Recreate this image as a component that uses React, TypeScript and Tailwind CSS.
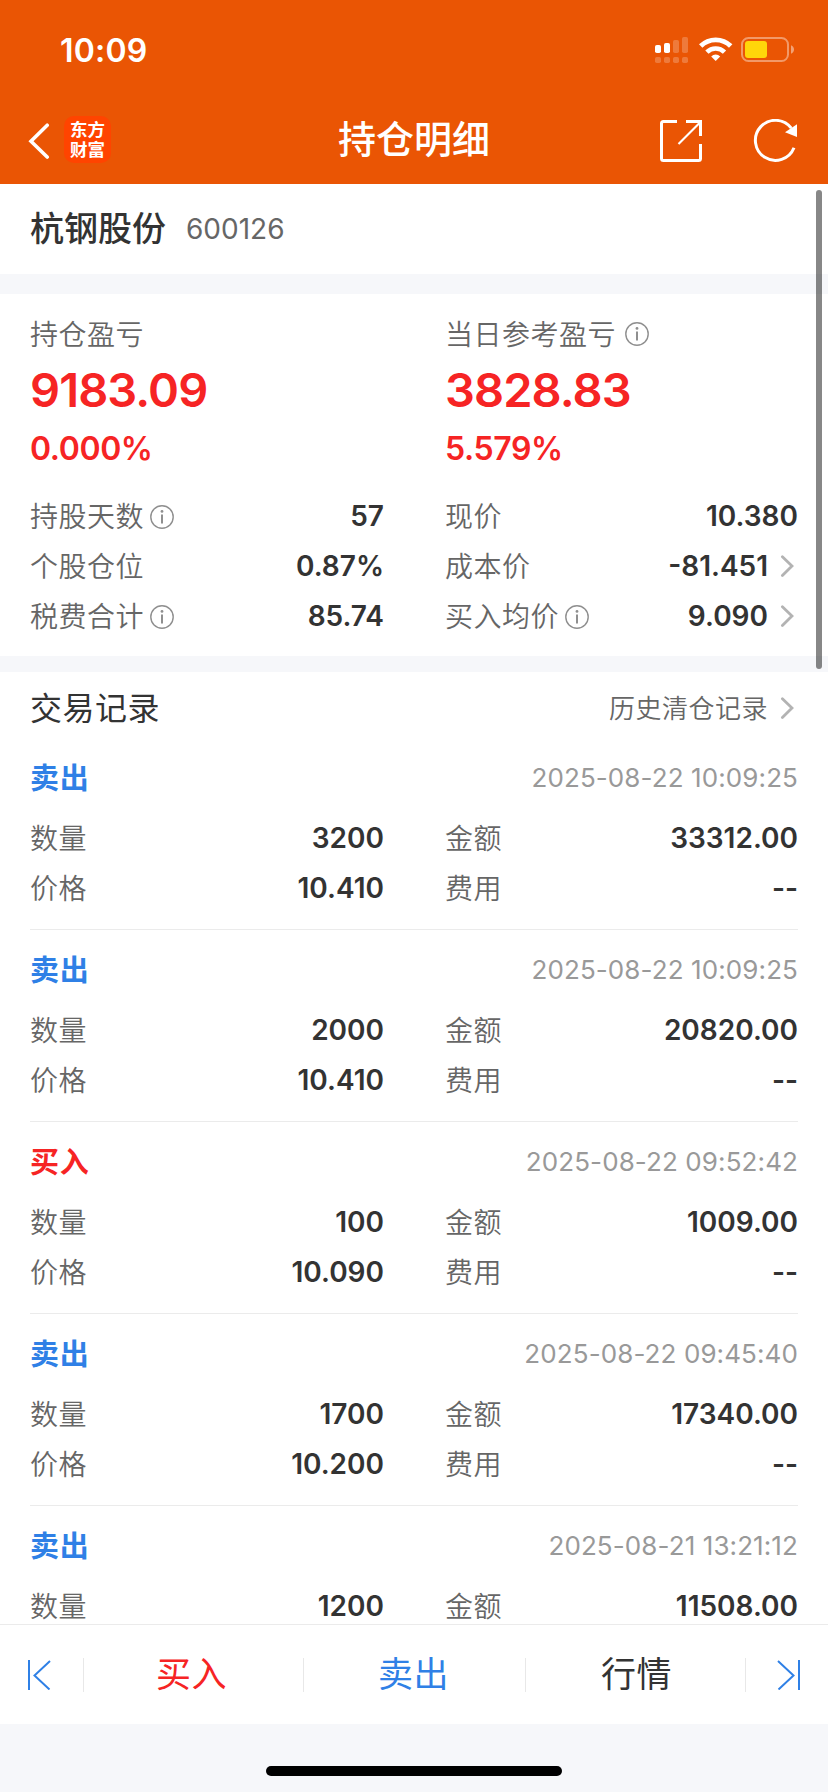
import React from 'react';

const latin = "font-['Inter','Noto_Sans_CJK_SC',sans-serif]";

type Trade = { side: 'buy' | 'sell'; time: string; qty: string; amount: string; price?: string; fee?: string };

const trades: Trade[] = [
  { side: 'sell', time: '2025-08-22 10:09:25', qty: '3200', amount: '33312.00', price: '10.410', fee: '--' },
  { side: 'sell', time: '2025-08-22 10:09:25', qty: '2000', amount: '20820.00', price: '10.410', fee: '--' },
  { side: 'buy', time: '2025-08-22 09:52:42', qty: '100', amount: '1009.00', price: '10.090', fee: '--' },
  { side: 'sell', time: '2025-08-22 09:45:40', qty: '1700', amount: '17340.00', price: '10.200', fee: '--' },
  { side: 'sell', time: '2025-08-21 13:21:12', qty: '1200', amount: '11508.00' },
];

function InfoIcon({ className = '' }: { className?: string }) {
  return (
    <svg className={`h-6 w-6 shrink-0 ${className}`} viewBox="0 0 24 24" fill="none">
      <circle cx="12" cy="12" r="11.2" stroke="#8f8f8f" strokeWidth="1.4" />
      <circle cx="12" cy="6.4" r="1.4" fill="#8f8f8f" />
      <path d="M12 9.6V18.6" stroke="#8f8f8f" strokeWidth="2" />
    </svg>
  );
}

function Chevron() {
  return (
    <svg className="mr-1 ml-3 h-6 w-[14px] shrink-0" viewBox="0 0 14 24" fill="none">
      <path d="M2.4 2.8L12 12L2.4 21.6" stroke="#b3b3b3" strokeWidth="2.8" strokeLinecap="round" strokeLinejoin="miter" />
    </svg>
  );
}

function Row({ label, value, info, arrow }: { label: string; value: string; info?: boolean; arrow?: boolean }) {
  return (
    <div className="flex h-[50px] items-center">
      <span className="pt-[2px] text-[28px] font-[350] tracking-[0.5px] text-[#666]">{label}</span>
      {info && <InfoIcon className="mt-[2px] ml-[6px]" />}
      <span className="ml-auto text-[28px] font-semibold text-[#333]">{value}</span>
      {arrow && <Chevron />}
    </div>
  );
}

function Summary({ label, value, percent, info }: { label: string; value: string; percent: string; info?: boolean }) {
  return (
    <div className="mb-[21px]">
      <div className="flex h-10 items-center">
        <span className="pt-[2px] text-[28px] font-[350] tracking-[0.5px] text-[#666]">{label}</span>
        {info && <InfoIcon className="ml-[9px]" />}
      </div>
      <div className="flex h-[72px] items-center text-[47px] font-semibold tracking-[-0.9px] text-[#f62424]">{value}</div>
      <div className="flex h-11 items-center pt-[2px] text-[32px] font-semibold tracking-[-0.4px] text-[#f62424]">{percent}</div>
    </div>
  );
}

function TradeItem({ t }: { t: Trade }) {
  return (
    <div className="h-[192px] shrink-0 border-b border-[#ebebeb]">
      <div className="flex h-[75px] items-center justify-between pt-[5px]">
        <span className={`pt-[2px] text-[29px] font-bold tracking-[0.8px] ${t.side === 'sell' ? 'text-[#2f80e6]' : 'text-[#f62424]'}`}>
          {t.side === 'sell' ? '卖出' : '买入'}
        </span>
        <span className="pb-[2px] text-[26px] tracking-[0.1px] text-[#999]">{t.time}</span>
      </div>
      <div className="grid grid-cols-[354px_353px] gap-x-[61px]">
        <Row label="数量" value={t.qty} />
        <Row label="金额" value={t.amount} />
        {t.price && <Row label="价格" value={t.price} />}
        {t.fee && <Row label="费用" value={t.fee} />}
      </div>
    </div>
  );
}

function StatusBar() {
  return (
    <div className="flex h-[98px] items-center justify-between pr-[34px] pl-[60px]">
      <span className="pt-[3px] text-[32px] leading-none font-semibold tracking-[0.2px] text-white">10:09</span>
      <svg className="h-[30px] w-[141px]" viewBox="0 0 141 30" fill="none">
        <g fill="#fff">
          <rect x="2" y="11" width="6" height="8" rx="1.8" />
          <rect x="11" y="9" width="6" height="10" rx="1.8" />
          <g opacity=".22">
            <rect x="20" y="6" width="6" height="13" rx="1.8" />
            <rect x="29" y="3" width="6" height="16" rx="1.8" />
            <rect x="2" y="23" width="6" height="6" rx="1.8" />
            <rect x="11" y="23" width="6" height="6" rx="1.8" />
            <rect x="20" y="23" width="6" height="6" rx="1.8" />
            <rect x="29" y="23" width="6" height="6" rx="1.8" />
          </g>
        </g>
        <path d="M47.7 12A21.2 21.2 0 0 1 77.7 12" stroke="#fff" strokeWidth="4.8" />
        <path d="M53.9 18.2A12.4 12.4 0 0 1 71.5 18.2" stroke="#fff" strokeWidth="4.6" />
        <path d="M62.7 27L58.2 22.5A6.3 6.3 0 0 1 67.2 22.5Z" fill="#fff" />
        <rect x="89" y="4" width="46" height="23" rx="6.5" stroke="#fff" strokeOpacity=".4" strokeWidth="2" />
        <rect x="92" y="7" width="22" height="17" rx="3" fill="#ffd60a" />
        <path d="M138 11.2C142 13 142 18 138 19.8Z" fill="#fff" fillOpacity=".45" />
      </svg>
    </div>
  );
}

function NavBar() {
  return (
    <div className="grid h-[86px] grid-cols-[280px_1fr_280px] items-center">
      <div className="flex items-center pb-[3px] pl-7">
        <svg className="mt-[2px] h-9 w-[22px]" viewBox="0 0 22 36" fill="none">
          <path d="M19.2 2.2L3 18.2L19.2 34" stroke="#fff" strokeWidth="3.6" strokeLinecap="round" strokeLinejoin="miter" />
        </svg>
        <div className="ml-[14px] flex h-[47px] w-[47px] flex-col items-center justify-center rounded-[10px] bg-[#ff4400] text-[17.5px] leading-[19.5px] font-bold text-white">
          <span>东方</span>
          <span>财富</span>
        </div>
      </div>
      <h1 className="pb-1 text-center text-[38px] leading-none font-medium text-white">持仓明细</h1>
      <div className="flex items-center justify-end pr-[30px]">
        <svg className="h-11 w-11" viewBox="0 0 44 44" fill="none" stroke="#fff" strokeWidth="3">
          <path d="M18 2.5H4.5Q2.5 2.5 2.5 4.5V39.5Q2.5 41.5 4.5 41.5H39.5Q41.5 41.5 41.5 39.5V25" />
          <path d="M27 2.5H41.5V17" />
          <path d="M41.5 3L19.5 25" strokeWidth="2.2" />
        </svg>
        <svg className="ml-[50px] h-11 w-[45px]" viewBox="0 0 45 44" fill="none">
          <path d="M41 28.7A20 20 0 1 1 38.3 9.2" stroke="#fff" strokeWidth="3" />
          <path d="M44 5.3V18L32 13.3Z" fill="#fff" />
        </svg>
      </div>
    </div>
  );
}

export default function App() {
  return (
    <div className={`relative flex h-[1792px] w-[828px] flex-col overflow-hidden bg-white ${latin}`}>
      <header className="h-[184px] shrink-0 bg-[#ea5504]">
        <StatusBar />
        <NavBar />
      </header>

      <section className="flex h-[90px] shrink-0 items-center px-[30px]">
        <span className="pb-[2px] text-[34px] font-medium text-[#333]">杭钢股份</span>
        <span className="ml-5 text-[28px] text-[#666]">600126</span>
      </section>

      <div className="h-5 shrink-0 bg-[#f6f7fa]" />

      <section className="grid h-[362px] shrink-0 grid-cols-[354px_353px] content-start gap-x-[61px] px-[30px] pt-5">
        <Summary label="持仓盈亏" value="9183.09" percent="0.000%" />
        <Summary label="当日参考盈亏" value="3828.83" percent="5.579%" info />
        <Row label="持股天数" value="57" info />
        <Row label="现价" value="10.380" />
        <Row label="个股仓位" value="0.87%" />
        <Row label="成本价" value="-81.451" arrow />
        <Row label="税费合计" value="85.74" info />
        <Row label="买入均价" value="9.090" info arrow />
      </section>

      <div className="h-4 shrink-0 bg-[#f6f7fa]" />

      <section className="flex min-h-0 flex-1 flex-col overflow-hidden px-[30px]">
        <div className="flex h-[66px] shrink-0 items-center pt-[6px]">
          <h2 className="pt-px text-[32px] tracking-[0.5px] text-[#333]">交易记录</h2>
          <span className="ml-auto text-[26px] font-[350] tracking-[0.5px] text-[#666]">历史清仓记录</span>
          <Chevron />
        </div>
        {trades.map((t, i) => (
          <TradeItem key={i} t={t} />
        ))}
      </section>

      <nav className="flex h-[100px] shrink-0 items-center border-t border-[#ebebeb] text-[35px] tracking-[0.5px]">
        <div className="flex w-[83px] justify-center">
          <svg className="ml-[-6px] h-[30px] w-[24px]" viewBox="0 0 24 30" fill="none" stroke="#2f80e6" strokeWidth="2">
            <path d="M2 0V30M23 1L7.5 15.5L22.5 29.5" />
          </svg>
        </div>
        <div className="flex h-[34px] w-[220px] items-center justify-center border-l border-[#e8e8e8] pr-1 text-[#f62424]">买入</div>
        <div className="flex h-[34px] w-[222px] items-center justify-center border-l border-[#e8e8e8] pr-[2px] text-[#2f80e6]">卖出</div>
        <div className="flex h-[34px] w-[220px] items-center justify-center border-l border-[#e8e8e8] pl-[2px] text-[#333]">行情</div>
        <div className="flex h-[34px] w-[83px] items-center justify-center border-l border-[#e8e8e8]">
          <svg className="ml-[3px] h-[30px] w-[24px]" viewBox="0 0 24 30" fill="none" stroke="#2f80e6" strokeWidth="2">
            <path d="M22 0V30M1 1L16.5 15.5L1.5 29.5" />
          </svg>
        </div>
      </nav>

      <footer className="flex h-[68px] shrink-0 justify-center bg-[#f6f7fa] pt-[42px]">
        <div className="h-[10px] w-[296px] rounded-full bg-black" />
      </footer>

      <div className="absolute top-[190px] left-[816px] h-[479px] w-[6px] rounded-full bg-black/47" />
    </div>
  );
}
